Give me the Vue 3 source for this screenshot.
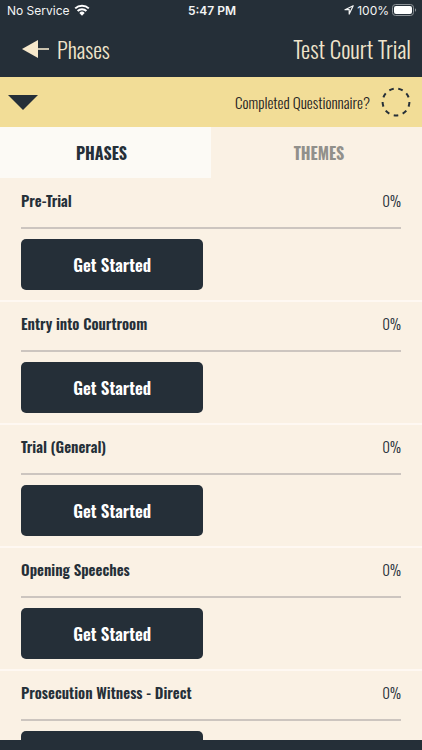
<template>
    <div class="screen">
        <div class="status">
            <div class="status-left">
                <span>No Service</span>
                <svg class="wifi" viewBox="0 0 16 12" aria-hidden="true">
                    <path d="M1.2 4.4a9.8 9.8 0 0 1 13.6 0" />
                    <path d="M3.6 7a6.3 6.3 0 0 1 8.8 0" />
                    <path class="solid" d="M5.3 8.9a3.9 3.9 0 0 1 5.4 0L8 11.7z" />
                </svg>
            </div>
            <span class="status-time">5:47 PM</span>
            <div class="status-right">
                <svg class="location" viewBox="0 0 10 10" aria-hidden="true">
                    <path d="M9.2.8 1 4.7h4.2v4.4z" />
                </svg>
                <span>100%</span>
                <svg class="battery" viewBox="0 0 25 12" aria-hidden="true">
                    <rect class="shell" x=".5" y=".5" width="21" height="11" rx="3" />
                    <rect class="level" x="2" y="2" width="18" height="8" rx="2" />
                    <path class="level cap" d="M23 4.2a2 2 0 0 1 0 3.6z" />
                </svg>
            </div>
        </div>

        <header class="header">
            <button class="back" type="button">
                <svg viewBox="0 0 28 20" aria-hidden="true">
                    <path d="M17 1v18L1 10z" />
                    <path class="shaft" d="M17 10h11" />
                </svg>
                <span>Phases</span>
            </button>
            <h1>Test Court Trial</h1>
        </header>

        <div class="question">
            <button class="expand" type="button" aria-label="Expand">
                <svg viewBox="0 0 30 15" aria-hidden="true"><path d="M0 0h30L15 15z" /></svg>
            </button>
            <label for="completed">Completed Questionnaire?</label>
            <span class="check">
                <input id="completed" v-model="completed" type="checkbox" />
                <svg viewBox="0 0 30 30" aria-hidden="true">
                    <circle cx="15" cy="15" r="13.4" pathLength="90" :class="{ done: completed }" />
                </svg>
            </span>
        </div>

        <nav class="tabs">
            <button
                v-for="tab in tabs"
                :key="tab"
                type="button"
                :class="{ active: tab === activeTab }"
                @click="activeTab = tab"
            >{{ tab }}</button>
        </nav>

        <main class="phases">
            <section v-for="phase in phases" :key="phase.name" class="phase">
                <div class="phase-title">
                    <h2>{{ phase.name }}</h2>
                    <span>{{ phase.progress }}%</span>
                </div>
                <div class="track">
                    <div class="track-fill" :style="{ width: phase.progress + '%' }"></div>
                </div>
                <button class="start" type="button">Get Started</button>
            </section>
        </main>
        <footer class="footer"></footer>
    </div>
</template>

<script setup>
import { ref } from 'vue';

const completed = ref(false)
const tabs = ['PHASES', 'THEMES']
const activeTab = ref('PHASES')

const phases = ref([
    { name: 'Pre-Trial', progress: 0 },
    { name: 'Entry into Courtroom', progress: 0 },
    { name: 'Trial (General)', progress: 0 },
    { name: 'Opening Speeches', progress: 0 },
    { name: 'Prosecution Witness - Direct', progress: 0 },
])
</script>

<style>
    body{
        margin: 0;
        background-color: #252F38;
    }
</style>

<style scoped>
    .screen{
        display: flex;
        flex-direction: column;
        height: 100vh;
        overflow: hidden;
        background-color: #FAF1E4;
        color: #252F38;
        font-family: Oswald, "Liberation Sans Narrow", "Liberation Sans", sans-serif;
    }
    button{
        padding: 0;
        border: 0;
        background: none;
        color: inherit;
        font-family: inherit;
        cursor: pointer;
    }
    h1, h2{
        margin: 0;
    }
    .status{
        display: grid;
        grid-template-columns: 1fr auto 1fr;
        align-items: center;
        flex: none;
        height: 20px;
        padding: 0 5px 0 7px;
        background-color: #252F38;
        color: #F4F5F5;
        font-family: Inter, sans-serif;
        font-size: 12px;
    }
    .status-left, .status-right{
        display: flex;
        align-items: center;
        gap: 4px;
    }
    .status-right{
        justify-content: flex-end;
        gap: 3px;
    }
    .status-time{
        font-weight: 600;
    }
    .wifi{
        width: 16px;
        height: 12px;
        fill: none;
        stroke: #FFFFFF;
        stroke-width: 2;
    }
    .wifi .solid{
        fill: #FFFFFF;
        stroke: none;
    }
    .location{
        width: 10px;
        height: 10px;
        fill: none;
        stroke: #F4F5F5;
        stroke-width: 1.2;
        stroke-linejoin: round;
    }
    .battery{
        width: 25px;
        height: 12px;
    }
    .shell{
        fill: none;
        stroke: #8C9297;
    }
    .level{
        fill: #FFFFFF;
    }
    .cap{
        fill: #8C9297;
    }
    .header{
        display: flex;
        justify-content: space-between;
        align-items: center;
        flex: none;
        height: 57px;
        padding: 0 11px 0 21px;
        background-color: #252F38;
        color: #EFE4CB;
    }
    .header h1{
        font-size: 23px;
        font-weight: 300;
    }
    .back{
        display: flex;
        align-items: center;
        gap: 8px;
        font-size: 22px;
        font-weight: 300;
    }
    .back svg{
        width: 28px;
        height: 20px;
        fill: #F6E8CB;
    }
    .back .shaft{
        stroke: #C9C2AE;
        stroke-width: 2;
    }
    .question{
        display: flex;
        align-items: center;
        flex: none;
        height: 50px;
        padding: 0 11px 0 8px;
        background-color: #F2DD97;
        color: #1E211F;
        font-size: 15px;
        font-weight: 300;
    }
    .expand{
        margin-right: auto;
    }
    .expand svg{
        display: block;
        width: 30px;
        height: 15px;
        fill: #252F38;
    }
    .check{
        display: grid;
        width: 30px;
        height: 30px;
        margin-left: 11px;
    }
    .check input, .check svg{
        grid-area: 1 / 1;
        width: 30px;
        height: 30px;
        margin: 0;
    }
    .check input{
        appearance: none;
        cursor: pointer;
    }
    .check svg{
        pointer-events: none;
    }
    .check circle{
        fill: none;
        stroke: #252F38;
        stroke-width: 2;
        stroke-dasharray: 5 5;
    }
    .check .done{
        fill: #252F38;
        stroke-dasharray: none;
    }
    .tabs{
        display: grid;
        grid-template-columns: 1fr 1fr;
        flex: none;
        height: 51px;
    }
    .tabs button{
        padding-right: 8px;
        color: #91908B;
        font-size: 16px;
        font-weight: 700;
    }
    .tabs button + button{
        padding: 0 0 0 5px;
    }
    .tabs .active{
        background-color: #FCFAF5;
        color: #252F38;
    }
    .phases{
        flex: 1;
        min-height: 0;
        overflow-y: auto;
        scrollbar-width: none;
    }
    .phase{
        padding: 10px 21px;
        border-bottom: 2px solid #FEF8F2;
    }
    .phase:first-child{
        padding-top: 11px;
    }
    .phase-title{
        display: flex;
        justify-content: space-between;
        align-items: center;
        height: 22px;
        margin-bottom: 16px;
    }
    .phase-title h2{
        font-size: 15px;
        font-weight: 600;
    }
    .phase-title span{
        font-size: 15px;
        font-weight: 300;
    }
    .track{
        height: 2px;
        margin-bottom: 10px;
        background-color: #CCC5BF;
    }
    .track-fill{
        height: 100%;
        background-color: #252F38;
    }
    .start{
        width: 48%;
        height: 51px;
        border-radius: 5px;
        background-color: #252F38;
        color: #FFFFFF;
        font-size: 17px;
        font-weight: 600;
    }
    .footer{
        flex: none;
        height: 10px;
        background-color: #252F38;
    }
</style>
